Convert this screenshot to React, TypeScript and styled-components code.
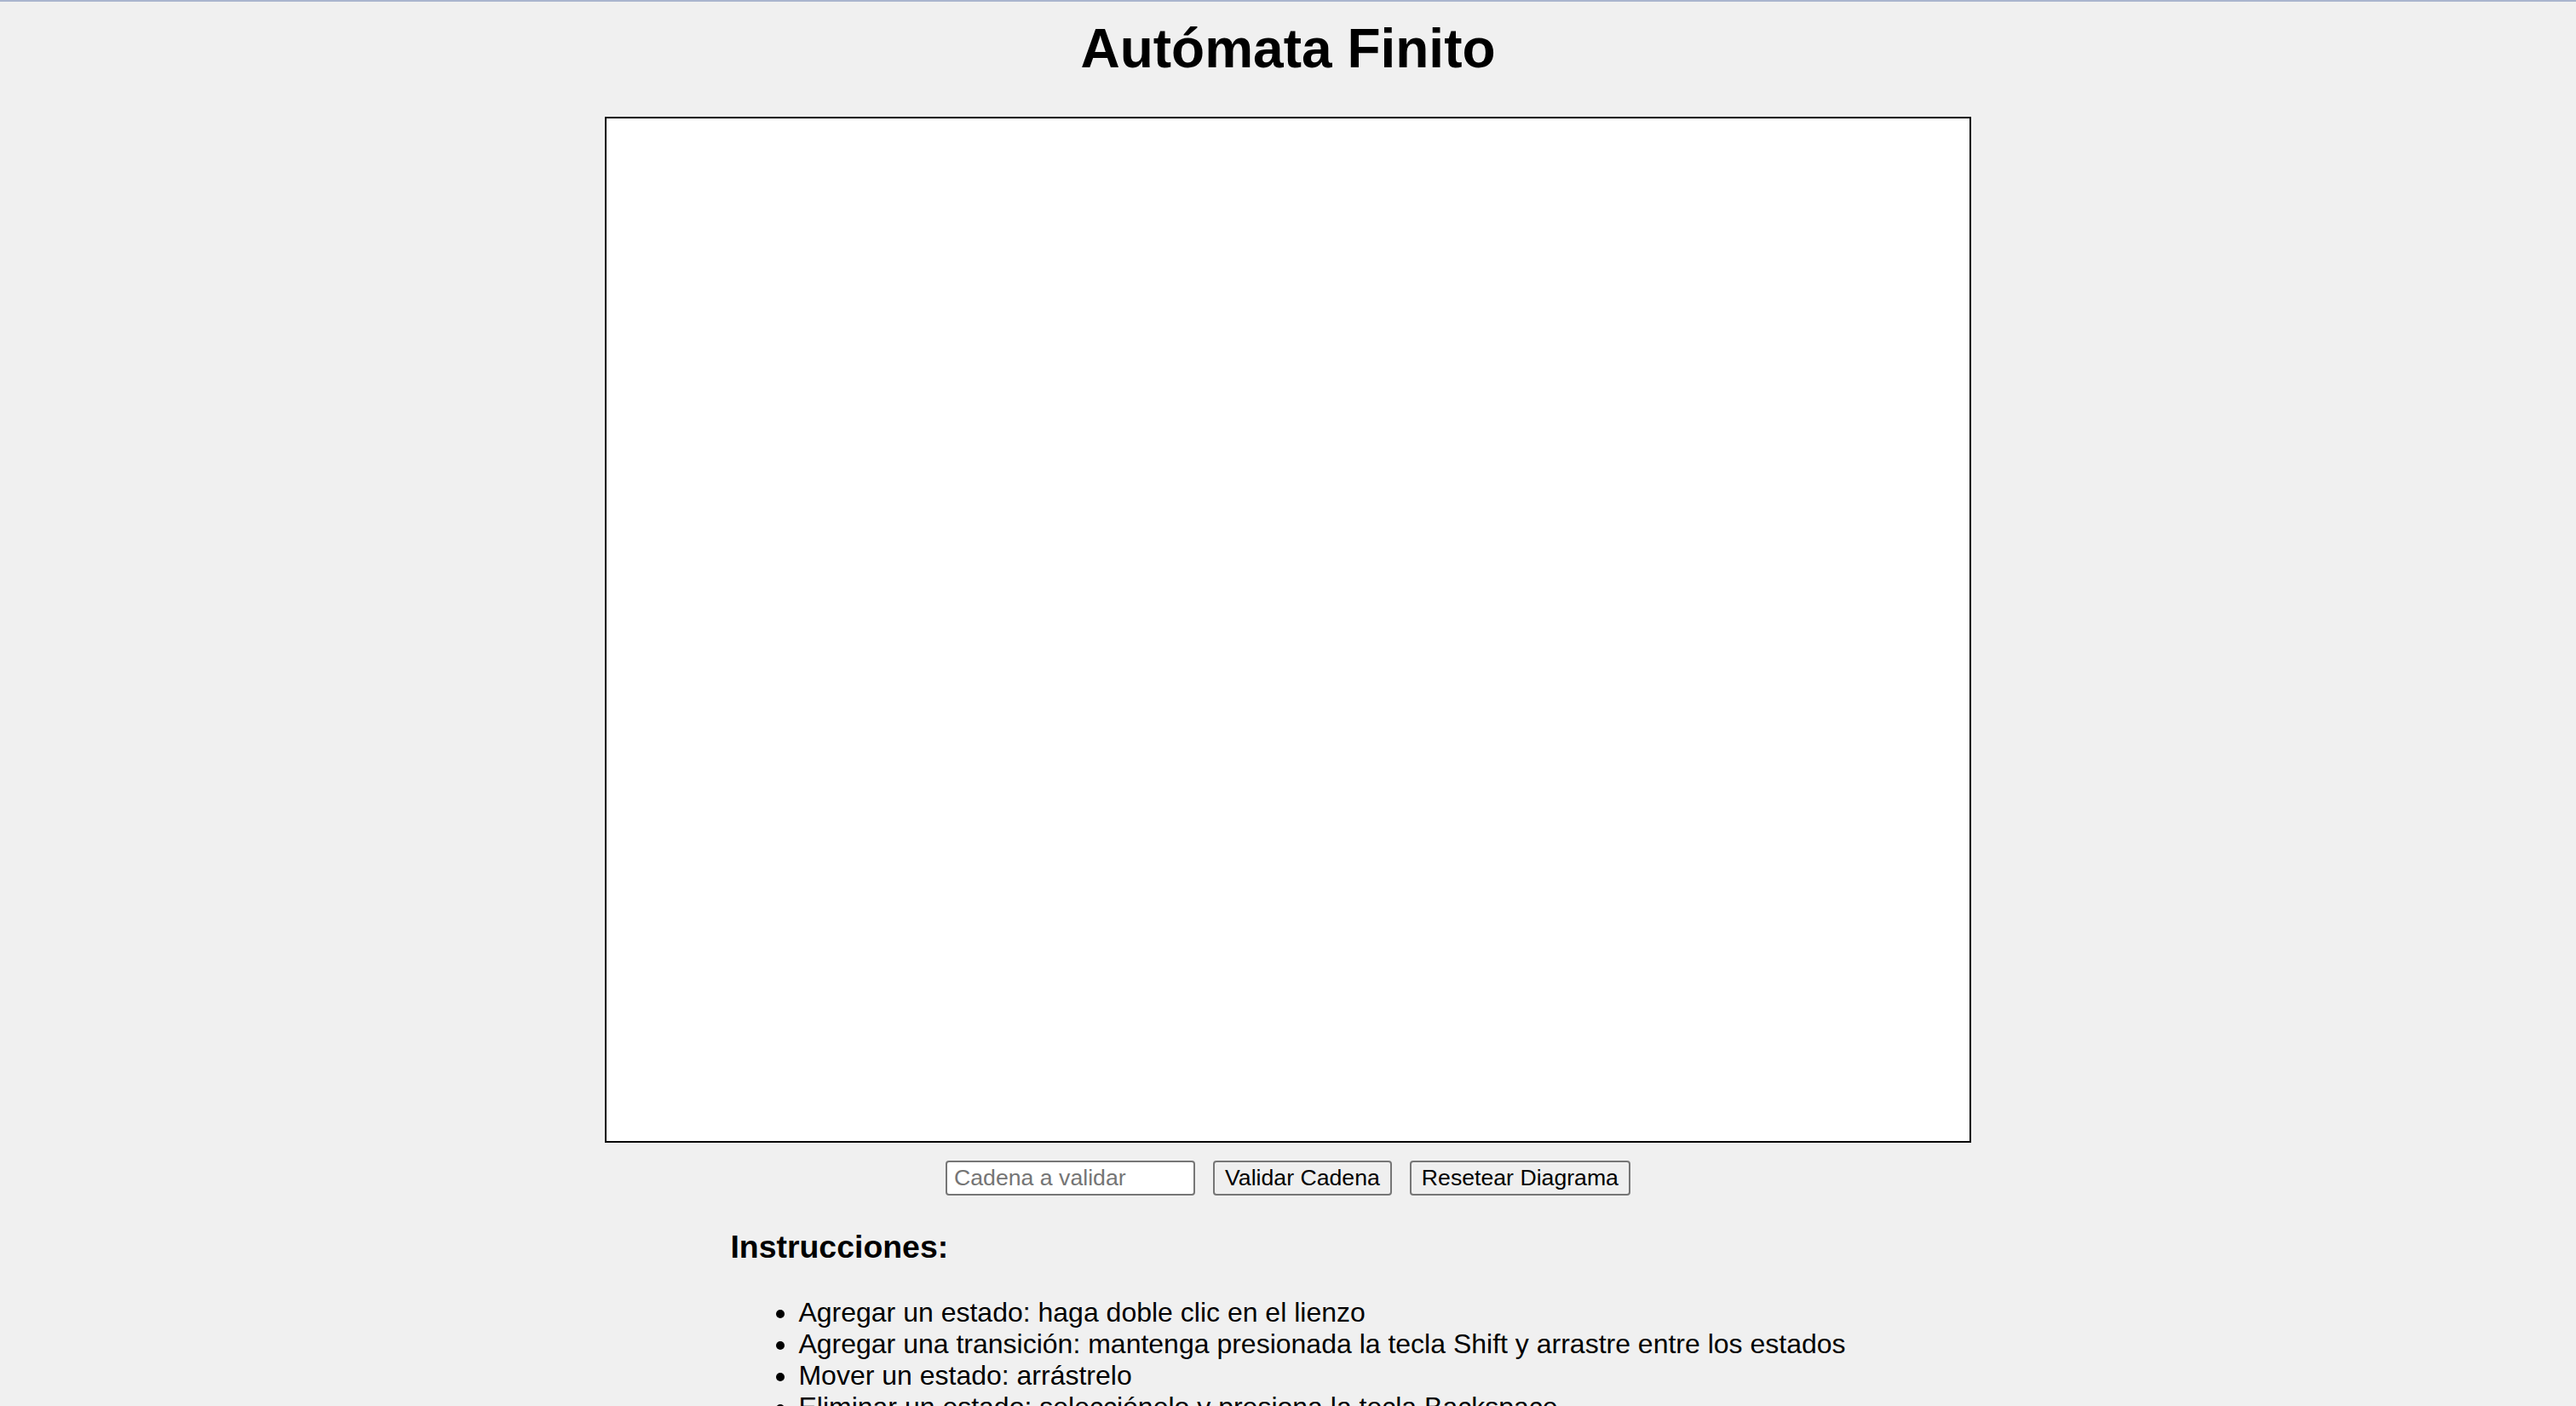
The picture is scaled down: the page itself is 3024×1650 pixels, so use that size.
import React from "react";
import styled, { createGlobalStyle } from "styled-components";

const instructions = [
    "Agregar un estado: haga doble clic en el lienzo",
    "Agregar una transición: mantenga presionada la tecla Shift y arrastre entre los estados",
    "Mover un estado: arrástrelo",
    "Eliminar un estado: selecciónelo y presiona la tecla Backspace",
    "Eliminar una transición: selecciónela y presiona la tecla Backspace",
];

export default function App() {
    return (
        <>
            <GlobalStyle />
            <Page>
                <Title>Autómata Finito</Title>
                <Canvas />
                <Controls>
                    <TextInput type="text" placeholder="Cadena a validar" />
                    <Button>Validar Cadena</Button>
                    <Button>Resetear Diagrama</Button>
                </Controls>
                <Instructions>
                    <Heading>Instrucciones:</Heading>
                    <List>
                        {instructions.map(text => (
                            <Item key={text}>{text}</Item>
                        ))}
                    </List>
                </Instructions>
            </Page>
        </>
    );
}

const GlobalStyle = createGlobalStyle`
    html {
        border-top: 2px solid #aab5ce;
        background: #f0f0f0;
    }
    body {
        margin: 0;
        background: #f0f0f0;
        color: #000;
        font-family: "Liberation Sans", Arial, sans-serif;
    }
`;

const Page = styled.div`
    display: flex;
    flex-direction: column;
    align-items: center;
`;

const Title = styled.h1`
    margin: 18px 0 0;
    font-size: 64px;
    line-height: 74px;
    font-weight: bold;
`;

const Canvas = styled.div`
    margin-top: 43px;
    width: 1600px;
    height: 1200px;
    border: 2px solid #000;
    background: #fff;
`;

const Controls = styled.div`
    display: flex;
    align-items: center;
    gap: 21px;
    margin-top: 21px;
`;

const TextInput = styled.input`
    box-sizing: border-box;
    width: 293px;
    height: 41px;
    padding: 2px 8px;
    border: 2px solid #767676;
    border-radius: 4px;
    background: #fff;
    font-family: "Liberation Sans", Arial, sans-serif;
    font-size: 26.67px;
    outline: none;

    &::placeholder {
        color: #757575;
    }
`;

const Button = styled.button`
    box-sizing: border-box;
    height: 41px;
    padding: 0 12px;
    border: 2px solid #767676;
    border-radius: 4px;
    background: #efefef;
    color: #000;
    font-family: "Liberation Sans", Arial, sans-serif;
    font-size: 26.67px;
`;

const Instructions = styled.div`
    width: fit-content;
    margin-top: 39px;
`;

const Heading = styled.h3`
    margin: 0 0 37.44px;
    font-size: 37.44px;
    line-height: 43px;
    font-weight: bold;
`;

const List = styled.ul`
    margin: 0;
    padding-left: 80px;
`;

const Item = styled.li`
    font-size: 32px;
    line-height: 36.8px;
`;
